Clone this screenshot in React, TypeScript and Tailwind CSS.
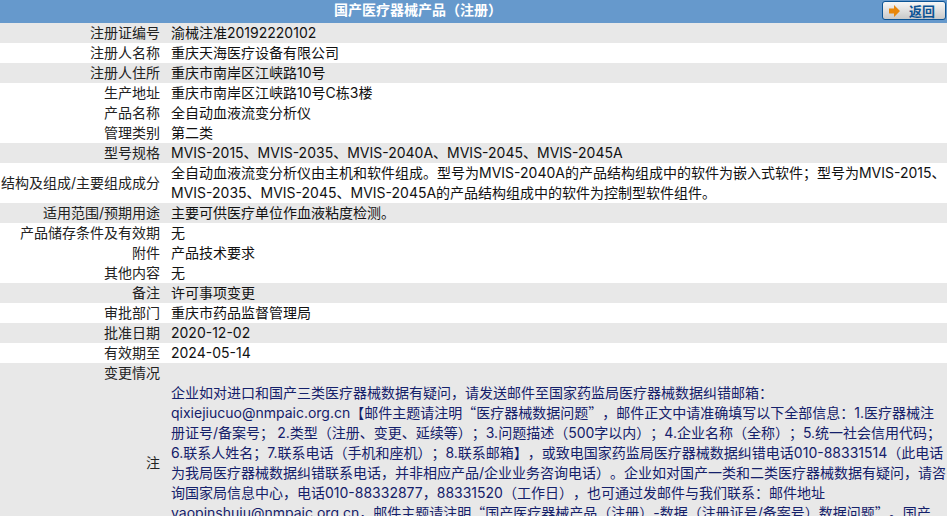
const rows: { label: string; value: string[]; gray?: boolean }[] = [
  { label: '注册证编号', value: ['渝械注准20192220102'], gray: true },
  { label: '注册人名称', value: ['重庆天海医疗设备有限公司'] },
  { label: '注册人住所', value: ['重庆市南岸区江峡路10号'], gray: true },
  { label: '生产地址', value: ['重庆市南岸区江峡路10号C栋3楼'] },
  { label: '产品名称', value: ['全自动血液流变分析仪'] },
  { label: '管理类别', value: ['第二类'] },
  { label: '型号规格', value: ['MVIS-2015、MVIS-2035、MVIS-2040A、MVIS-2045、MVIS-2045A'], gray: true },
  {
    label: '结构及组成/主要组成成分',
    value: [
      '全自动血液流变分析仪由主机和软件组成。型号为MVIS-2040A的产品结构组成中的软件为嵌入式软件；型号为MVIS-2015、',
      'MVIS-2035、MVIS-2045、MVIS-2045A的产品结构组成中的软件为控制型软件组件。',
    ],
  },
  { label: '适用范围/预期用途', value: ['主要可供医疗单位作血液粘度检测。'], gray: true },
  { label: '产品储存条件及有效期', value: ['无'] },
  { label: '附件', value: ['产品技术要求'] },
  { label: '其他内容', value: ['无'] },
  { label: '备注', value: ['许可事项变更'], gray: true },
  { label: '审批部门', value: ['重庆市药品监督管理局'] },
  { label: '批准日期', value: ['2020-12-02'], gray: true },
  { label: '有效期至', value: ['2024-05-14'] },
  { label: '变更情况', value: [''], gray: true },
];

const note = [
  '企业如对进口和国产三类医疗器械数据有疑问，请发送邮件至国家药监局医疗器械数据纠错邮箱：',
  'qixiejiucuo@nmpaic.org.cn【邮件主题请注明“医疗器械数据问题”，邮件正文中请准确填写以下全部信息：1.医疗器械注',
  '册证号/备案号； 2.类型（注册、变更、延续等）；3.问题描述（500字以内）；4.企业名称（全称）；5.统一社会信用代码；',
  '6.联系人姓名；7.联系电话（手机和座机）；8.联系邮箱】，或致电国家药监局医疗器械数据纠错电话010-88331514（此电话',
  '为我局医疗器械数据纠错联系电话，并非相应产品/企业业务咨询电话）。企业如对国产一类和二类医疗器械数据有疑问，请咨',
  '询国家局信息中心，电话010-88332877，88331520（工作日），也可通过发邮件与我们联系：邮件地址',
  'yaopinshuju@nmpaic.org.cn，邮件主题请注明“国产医疗器械产品（注册）-数据（注册证号/备案号）数据问题”。国产',
];

// latin runs get their own font, the wide CJK punctuation stays in the CJK one
function Mixed({ text }: { text: string }) {
  return (
    <>
      {text.split(/([A-Za-z0-9@.\-/]+)/).map((part, i) =>
        i % 2 ? (
          <span key={i} className="font-['Inter',sans-serif]">
            {part}
          </span>
        ) : (
          part
        ),
      )}
    </>
  );
}

function Row({ label, value, gray }: { label: string; value: string[]; gray?: boolean }) {
  return (
    <div className={`flex items-center ${gray ? 'bg-[#e8e8e8]' : 'bg-white'}`}>
      <div className="h-5 w-[160px] shrink-0 text-right whitespace-nowrap">
        <Mixed text={label} />
      </div>
      <div className="pl-[11px] min-h-5 whitespace-nowrap text-[#111]">
        {value.map((line) => (
          <div key={line} className="h-5">
            <Mixed text={line} />
          </div>
        ))}
      </div>
    </div>
  );
}

export default function App() {
  return (
    <div className="h-[516px] overflow-hidden bg-white text-[14px] leading-[18px] text-[#222] font-['Noto_Sans_CJK_SC',sans-serif] [text-spacing-trim:space-all]">
      <div className="relative h-[23px] bg-[#6699cc] pr-[111px] text-center text-[14px] leading-[19px] font-bold text-white">
        国产医疗器械产品（注册）
        <button className="absolute right-[1px] top-[1px] flex h-[19px] w-[64px] items-center gap-[9px] rounded-[3px] border border-[#0b5394] bg-gradient-to-b from-[#f7f7f7] to-[#c9c9c9] pl-[6px] text-[13px] leading-none font-bold text-[#0b5394]">
          <svg width="11" height="12" viewBox="0 0 11 12" className="shrink-0">
            <path d="M0 3.500h5V0l6 6-6 6V8.500H0z" fill="#e8870c" />
          </svg>
          返回
        </button>
      </div>
      {rows.map((r) => (
        <Row key={r.label} {...r} />
      ))}
      <div className="flex h-[160px] items-center bg-[#e8e8e8]">
        <div className="h-5 w-[160px] shrink-0 text-right">注</div>
        <div className="pl-[11px] whitespace-nowrap text-[#14206a]">
          {note.map((line) => (
            <div key={line} className="h-5">
              <Mixed text={line} />
            </div>
          ))}
          <div className="h-5" />
        </div>
      </div>
    </div>
  );
}
